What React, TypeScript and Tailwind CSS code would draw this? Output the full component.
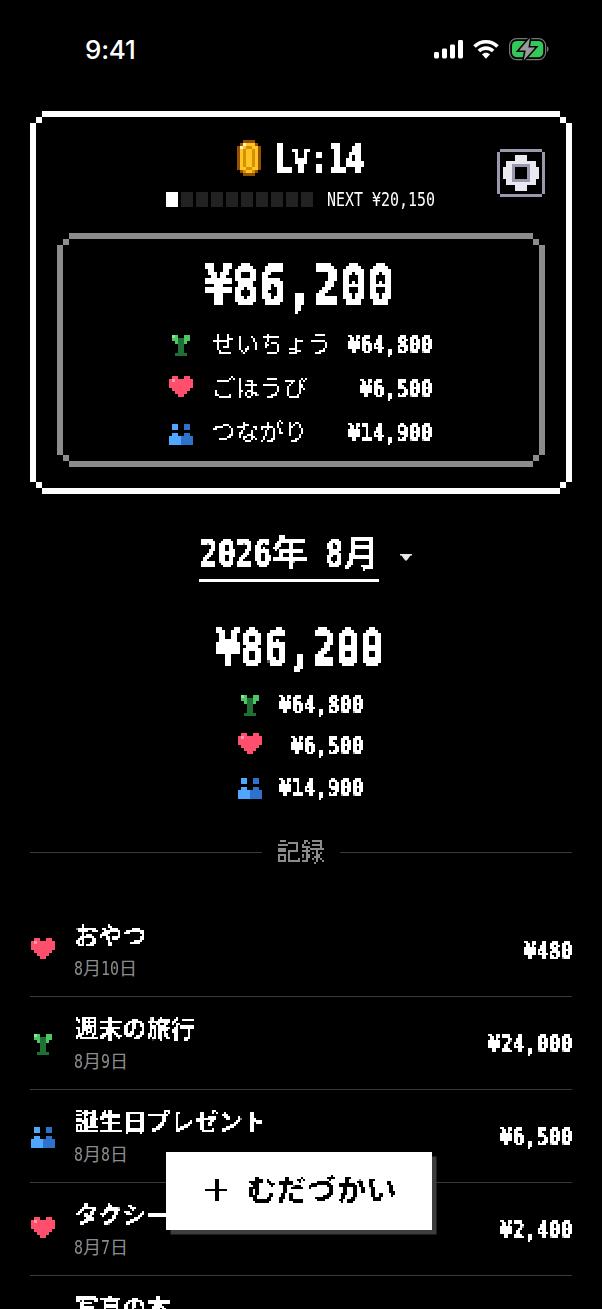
import type { ReactNode } from "react";

const PALETTE: Record<string, string> = {
  r: "#ff4f6d",
  p: "#ff9bab",
  g: "#4cc764",
  h: "#8ce99a",
  d: "#1f7034",
  b: "#4fa7ff",
  n: "#2f72cc",
  o: "#945200",
  y: "#ffc524",
  a: "#d79000",
  w: "#fff3c0",
  s: "#9b98ad",
  e: "#e9e9f1",
};

const HEART = [".rr..rr.", "rprrrrrr", "rrrrrrrr", "rrrrrrrr", ".rrrrrr.", "..rrrr..", "...rr..."];
const SPROUT = [".hg..gg.", ".ggddgg.", "..gddg..", "...dd...", "...dd...", "...dd...", "..dddd.."];
const PEOPLE = [".bb..nn.", ".bb..nn.", "........", ".bb..nn.", "bbbbnnnn", "bbbbnnnn", "bbbbnnnn"];
const COIN = [
  "..oooo..",
  ".owyyyo.",
  "owyaayyo",
  "oyayyayo",
  "oyayyayo",
  "oyayyayo",
  "oyayyayo",
  "oyayyayo",
  "oyayyayo",
  "oyyaayyo",
  ".oayyao.",
  "..oooo..",
];
const GEAR = [
  ".ssssssssssssss.",
  "s..............s",
  "s.....eeee.....s",
  "s.....eeee.....s",
  "s..eeeeeeeeee..s",
  "s..eessssssee..s",
  "s.eees....seee.s",
  "s.eees....seee.s",
  "s.eees....seee.s",
  "s.eees....seee.s",
  "s..eessssssee..s",
  "s..eeeeeeeeee..s",
  "s.....eeee.....s",
  "s.....eeee.....s",
  "s..............s",
  ".ssssssssssssss.",
];

function Sprite({ rows, className = "" }: { rows: string[]; className?: string }) {
  return (
    <svg
      width={rows[0].length * 3}
      height={rows.length * 3}
      viewBox={`0 0 ${rows[0].length} ${rows.length}`}
      shapeRendering="crispEdges"
      className={`block shrink-0 ${className}`}
    >
      {rows.flatMap((row, y) =>
        [...row].map((c, x) =>
          PALETTE[c] ? <rect key={`${x}-${y}`} x={x} y={y} width={1} height={1} fill={PALETTE[c]} /> : null,
        ),
      )}
    </svg>
  );
}

/* Samples the text once per cell and spreads every sample over its cell. */
function PixelFilter({ size }: { size: number }) {
  const c = Math.floor((size - 1) / 2);
  const shifts = Array.from({ length: size }, (_, i) => i - c);
  return (
    <filter id={`pixel-${size}`} x="0" y="0" width="100%" height="100%" colorInterpolationFilters="sRGB">
      <feFlood x={c} y={c} width="1" height="1" />
      <feComposite x="0" y="0" width={size} height={size} />
      <feTile result="grid" />
      <feGaussianBlur in="SourceGraphic" stdDeviation={size * 0.2} />
      <feComposite in2="grid" operator="in" />
      <feComponentTransfer result="dots">
        <feFuncA type="linear" slope="40" intercept="-18" />
      </feComponentTransfer>
      {shifts.map((s) => (
        <feOffset key={s} in="dots" dx={s} dy="0" result={`x${s}`} />
      ))}
      <feMerge result="bars">
        {shifts.map((s) => (
          <feMergeNode key={s} in={`x${s}`} />
        ))}
      </feMerge>
      {shifts.map((s) => (
        <feOffset key={s} in="bars" dx="0" dy={s} result={`y${s}`} />
      ))}
      <feMerge>
        {shifts.map((s) => (
          <feMergeNode key={s} in={`y${s}`} />
        ))}
      </feMerge>
    </filter>
  );
}

/* Half-width characters: each one takes 0.5em. */
function Half({ children, heavy = false }: { children: string; heavy?: boolean }) {
  return (
    <span className="inline-block h-[1em] text-left align-top" style={{ width: `${children.length * 0.5}em` }}>
      <span
        className={`block origin-left scale-x-[0.807] whitespace-pre font-['DejaVu_Sans_Mono',monospace] text-[1.03em] leading-[1em] ${
          heavy ? "[-webkit-text-stroke:0.022em_currentColor]" : ""
        }`}
      >
        {children}
      </span>
    </span>
  );
}

function Full({ children }: { children: string }) {
  return (
    <span className="inline-block h-[1em] whitespace-pre align-top font-['Noto_Sans_CJK_JP',sans-serif] leading-[0.86em]">
      {children}
    </span>
  );
}

function Frame({ bar, className, children }: { bar: string; className: string; children: ReactNode }) {
  const piece = `absolute ${bar}`;
  return (
    <div className={`relative ${className}`}>
      <i className={`${piece} left-3 right-3 top-0 h-1.5`} />
      <i className={`${piece} bottom-0 left-3 right-3 h-1.5`} />
      <i className={`${piece} bottom-3 left-0 top-3 w-1.5`} />
      <i className={`${piece} bottom-3 right-0 top-3 w-1.5`} />
      <i className={`${piece} left-1.5 top-1.5 size-1.5`} />
      <i className={`${piece} right-1.5 top-1.5 size-1.5`} />
      <i className={`${piece} bottom-1.5 left-1.5 size-1.5`} />
      <i className={`${piece} bottom-1.5 right-1.5 size-1.5`} />
      {children}
    </div>
  );
}

function Amount({ children }: { children: string }) {
  return (
    <span className="mt-0.5 h-6 text-right text-[24px] font-bold leading-none [filter:url(#pixel-2)]">
      <Half heavy>{children}</Half>
    </span>
  );
}

const SUMMARY = [
  { icon: SPROUT, label: "せいちょう", amount: "¥64,800", shift: "mt-0.5" },
  { icon: HEART, label: "ごほうび", amount: "¥6,500", shift: "-mt-[3px]" },
  { icon: PEOPLE, label: "つながり", amount: "¥14,900", shift: "mt-1" },
];

const RECORDS = [
  { icon: HEART, name: "おやつ", month: "8", day: "10", amount: "¥480", shift: "-mt-[2px]" },
  { icon: SPROUT, name: "週末の旅行", month: "8", day: "9", amount: "¥24,000", shift: "mt-1" },
  { icon: PEOPLE, name: "誕生日プレゼント", month: "8", day: "8", amount: "¥6,500", shift: "mt-1" },
  { icon: HEART, name: "タクシー", month: "8", day: "7", amount: "¥2,400", shift: "-mt-[2px]" },
  { icon: SPROUT, name: "写真の本", month: "8", day: "6", amount: "¥3,200", shift: "mt-1" },
];

function StatusBar() {
  return (
    <header className="flex h-[111px] items-start justify-between pl-[85px] pr-[53px] pt-[36px]">
      <span className="pt-[1.5px] font-['Inter',sans-serif] text-[26px] font-medium leading-6 tracking-[-0.2px]">9:41</span>
      <div className="flex h-6 items-center pt-px">
        <svg width="30" height="20" viewBox="0 0 30 20" fill="#fff">
          <rect x="0" y="13" width="5" height="6.500" rx="1.400" />
          <rect x="8" y="9.500" width="5" height="10" rx="1.400" />
          <rect x="16" y="5.500" width="5" height="14" rx="1.400" />
          <rect x="24" y="1" width="5" height="18.500" rx="1.400" />
        </svg>
        <svg width="26" height="20" viewBox="0 0 26 20" fill="none" stroke="#fff" strokeWidth="3.6" className="ml-[9px]">
          <path d="M1.500 7.600C8 1.100 18 1.100 24.500 7.600" />
          <path d="M5.900 12.100c4-4 10.200-4 14.200 0" />
          <path d="M8.900 15.300c2.300-2.100 5.900-2.100 8.200 0L13 19.700z" fill="#fff" stroke="none" />
        </svg>
        <svg width="41" height="24" viewBox="0 0 41 24" className="ml-[9px]">
          <rect x="1.600" y="1.600" width="36" height="21" rx="7" fill="none" stroke="#777" strokeWidth="1.200" />
          <path d="M39 9.300v5.600c2-.8 2-4.800 0-5.600z" fill="#777" />
          <rect x="4" y="4" width="31.200" height="16.200" rx="4.600" fill="#34c759" />
          <path
            d="M22 .8 11 13.400h6.800L15.600 23.400 27.200 10.600h-6.800z"
            fill="#999"
            stroke="#000"
            strokeWidth="3"
            paintOrder="stroke"
          />
        </svg>
      </div>
    </header>
  );
}

function LevelCard() {
  return (
    <Frame bar="bg-white" className="mx-[30px] h-[383px] px-[27px] pt-[29px]">
      <div className="relative h-[93px]">
        <div className="flex h-9 items-center pl-[180px]">
          <Sprite rows={COIN} />
          <span className="ml-[13px] h-9 text-[36px] font-bold leading-none [filter:url(#pixel-3)]">
            <Half heavy>Lv:14</Half>
          </span>
        </div>
        <div className="mt-[14px] flex h-[18px] items-center pl-[109px]">
          <div className="flex gap-[3px]">
            {Array.from({ length: 10 }, (_, i) => (
              <i key={i} className={`h-[15px] w-3 ${i === 0 ? "bg-white" : "bg-[#222]"}`} />
            ))}
          </div>
          <span className="ml-[14px] mt-px h-[18px] text-[18px] leading-none">
            <Half>NEXT ¥20,150</Half>
          </span>
        </div>
        <button className="absolute right-0 top-[9px]" aria-label="設定">
          <Sprite rows={GEAR} />
        </button>
      </div>
      <Frame bar="bg-[#8c8c8c]" className="h-[234px] pt-[24px]">
        <div className="ml-[148px] h-[54px] w-[189px] text-[54px] font-bold leading-none [-webkit-text-stroke:0.02em_currentColor] [filter:url(#pixel-3)]">
          <Half heavy>¥86,200</Half>
        </div>
        <div className="mt-[21px] flex w-[375px] flex-col gap-[20.2px] pl-[112px]">
          {SUMMARY.map((s) => (
            <div key={s.label} className="flex h-6 items-center">
              <Sprite rows={s.icon} className={s.shift} />
              <span className="ml-[18px] h-6 flex-1 text-[24px] leading-none [filter:url(#pixel-2)]">
                <Full>{s.label}</Full>
              </span>
              <Amount>{s.amount}</Amount>
            </div>
          ))}
        </div>
      </Frame>
    </Frame>
  );
}

function MonthSummary() {
  return (
    <section className="flex flex-col pt-[39px]">
      <button className="flex items-center pl-[199px]">
        <span className="block h-[49px] w-[180px] whitespace-nowrap border-b-[3px] border-white pt-0.5 text-left text-[36px] font-bold leading-none">
          <span className="flex h-[40px] [filter:url(#pixel-2)]">
            <Half heavy>2026</Half>
            <Full>年</Full>
            <Half heavy> 8</Half>
            <Full>月</Full>
          </span>
        </span>
        <svg width="12" height="7" viewBox="0 0 12 7" className="ml-[21px]" fill="#e8e8e8">
          <path d="M0 0h12v1.500h-1.500L6.800 6.500H5.200L1.500 1.500H0z" />
        </svg>
      </button>
      <div className="ml-[216px] mt-[42px] h-[48px] w-[168px] text-[48px] font-bold leading-none [filter:url(#pixel-3)]">
        <Half heavy>¥86,200</Half>
      </div>
      <div className="mt-[20px] flex w-[363px] flex-col gap-[17.4px] pl-[238px]">
        {SUMMARY.map((s) => (
          <div key={s.label} className="flex h-6 items-center justify-between">
            <Sprite rows={s.icon} className={s.shift} />
            <Amount>{s.amount}</Amount>
          </div>
        ))}
      </div>
    </section>
  );
}

function Records() {
  return (
    <section className="px-[30px]">
      <div className="mt-[41px] flex items-center text-[#8c8c8c]">
        <i className="mt-px h-px flex-1 bg-[#3a3a3a]" />
        <h2 className="mx-[14px] h-6 w-[50px] text-[24px] leading-none [filter:url(#pixel-2)]">
          <Full>記録</Full>
        </h2>
        <i className="mt-px h-px flex-1 bg-[#3a3a3a]" />
      </div>
      <ul className="mt-[40px]">
        {RECORDS.map((r) => (
          <li key={r.name} className="flex h-[93px] items-center border-b border-[#3a3a3a]">
            <Sprite rows={r.icon} className={`ml-[1px] ${r.shift}`} />
            <div className="ml-[19px] flex-1 pt-0.5">
              <div className="h-6 text-[24px] font-bold leading-none [filter:url(#pixel-2)]">
                <Full>{r.name}</Full>
              </div>
              <div className="mt-[12px] flex h-[18px] text-[18px] leading-none text-[#8c8c8c]">
                <Half>{r.month}</Half>
                <Full>月</Full>
                <Half>{r.day}</Half>
                <Full>日</Full>
              </div>
            </div>
            <Amount>{r.amount}</Amount>
          </li>
        ))}
      </ul>
    </section>
  );
}

export default function App() {
  return (
    <main className="relative h-[1309px] w-[602px] overflow-hidden bg-black text-white">
      <svg width="0" height="0" className="absolute">
        <PixelFilter size={2} />
        <PixelFilter size={3} />
      </svg>
      <StatusBar />
      <LevelCard />
      <MonthSummary />
      <Records />
      <button className="absolute left-[166px] top-[1152px] flex h-[78px] w-[266px] items-center bg-white pl-[35px] text-[30px] font-bold leading-none text-black shadow-[4.500px_4.500px_0_#3c3c3c]">
        <span className="-mt-0.5 h-[30px] whitespace-nowrap [filter:url(#pixel-2)]">
          <span className="[-webkit-text-stroke:0.4px_currentColor]">
            <Full>＋</Full>
          </span>
          <Half> </Half>
          <Full>むだづかい</Full>
        </span>
      </button>
    </main>
  );
}
